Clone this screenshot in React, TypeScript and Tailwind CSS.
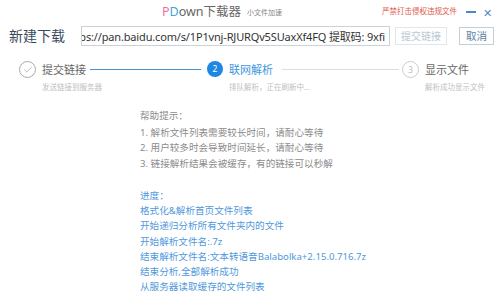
import { Check } from "lucide-react";

const helpLines = [
  "1. 解析文件列表需要较长时间，请耐心等待",
  "2. 用户较多时会导致时间延长，请耐心等待",
  "3. 链接解析结果会被缓存，有的链接可以秒解",
];

const progressLines = [
  "进度：",
  "格式化&解析首页文件列表",
  "开始递归分析所有文件夹内的文件",
  "开始解析文件名:.7z",
  "结束解析文件名:文本转语音Balabolka+2.15.0.716.7z",
  "结束分析,全部解析成功",
  "从服务器读取缓存的文件列表",
];

export default function App() {
  return (
    <div className="h-[301px] w-[500px] overflow-hidden bg-white font-['Noto_Sans','Noto_Sans_CJK_SC',sans-serif]">
      {/* title bar */}
      <div className="flex h-[24px] items-center">
        <div className="flex items-center pl-[162px]">
          <span className="text-[12.5px] leading-none text-[#666]">
            <span className="text-[#ec6f9b]">P</span>
            <span className="text-[#3aa6ec]">D</span>
            own下载器
          </span>
          <span className="ml-[6px] text-[7px] leading-none text-[#888]">小文件加速</span>
        </div>
        <div className="ml-auto flex items-center pr-[8px]">
          <span className="text-[7.5px] leading-none text-[#e0584c]">严禁打击侵权违规文件</span>
          <span className="ml-[9px] block h-[1.5px] w-[10px] bg-[#4f86c6]" />
          <span className="ml-[7px] text-[11px] leading-none text-[#4f86c6]">✕</span>
        </div>
      </div>

      {/* new download row */}
      <div className="flex h-[24px] items-center">
        <span className="w-[81px] pl-[9px] text-[14px] leading-[18px] text-[#3a4a5c]">新建下载</span>
        <div className="flex h-[20px] w-[309px] items-center justify-end overflow-hidden border border-[#c9d1d9] bg-white pr-[4px]">
          <span className="whitespace-nowrap text-[11px] leading-none tracking-[-0.16px] text-[#333]">
            https://pan.baidu.com/s/1P1vnj-RJURQv5SUaxXf4FQ 提取码: 9xfi
          </span>
        </div>
        <button
          type="button"
          className="ml-[5px] flex h-[18px] w-[52px] items-center justify-center border border-[#dfe6ed] text-[10px] leading-none text-[#b9c8d6]"
        >
          提交链接
        </button>
        <button
          type="button"
          className="ml-[12px] flex h-[18px] w-[35px] items-center justify-center border border-[#c5ced7] text-[10.5px] leading-none text-[#5a7ea6]"
        >
          取消
        </button>
      </div>

      {/* steps */}
      <div className="mt-[13px] flex items-start pl-[19px]">
        <div className="flex items-start">
          <span className="flex h-[17px] w-[17px] items-center justify-center rounded-full border border-[#a9a9a9]">
            <Check className="h-[10px] w-[10px] text-[#999]" strokeWidth={1.6} />
          </span>
          <div className="ml-[6px] w-[44px]">
            <p className="whitespace-nowrap text-[11px] leading-[17px] text-[#666]">提交链接</p>
            <p className="mt-[6px] whitespace-nowrap text-[7.5px] leading-none text-[#c0c0c0]">发送链接到服务器</p>
          </div>
        </div>
        <span className="mt-[8px] ml-[4px] block h-px w-[111px] bg-[#4a8fd0]" />
        <div className="ml-[6px] flex items-start">
          <span className="flex h-[16px] w-[16px] items-center justify-center rounded-full bg-[#1e87e4] text-[8.5px] leading-none text-white">
            2
          </span>
          <div className="ml-[6px] w-[44px]">
            <p className="whitespace-nowrap text-[11px] leading-[17px] text-[#3d97e0]">联网解析</p>
            <p className="mt-[6px] whitespace-nowrap text-[7.5px] leading-none text-[#c0c0c0]">排队解析，正在刷新中...</p>
          </div>
        </div>
        <span className="mt-[8px] ml-[9px] block h-px w-[117px] bg-[#ddd]" />
        <div className="ml-[3px] flex items-start">
          <span className="flex h-[17px] w-[17px] items-center justify-center rounded-full border border-[#ccc] text-[8px] leading-none text-[#bbb]">
            3
          </span>
          <div className="ml-[6px] w-[44px]">
            <p className="whitespace-nowrap text-[11px] leading-[17px] text-[#666]">显示文件</p>
            <p className="mt-[6px] whitespace-nowrap text-[7.5px] leading-none text-[#c0c0c0]">解析成功显示文件</p>
          </div>
        </div>
      </div>

      {/* help */}
      <div className="mt-[16px] pl-[140px] text-[9.6px]">
        <p className="leading-[15px] text-[#8c8c8c]">帮助提示：</p>
        <div className="mt-[2px]">
          {helpLines.map((line) => (
            <p key={line} className="whitespace-nowrap leading-[15.5px] text-[#8c8c8c]">
              {line}
            </p>
          ))}
        </div>
        <div className="mt-[17px]">
          {progressLines.map((line) => (
            <p key={line} className="whitespace-nowrap leading-[15.2px] text-[#4f98dc]">
              {line}
            </p>
          ))}
        </div>
      </div>
    </div>
  );
}
